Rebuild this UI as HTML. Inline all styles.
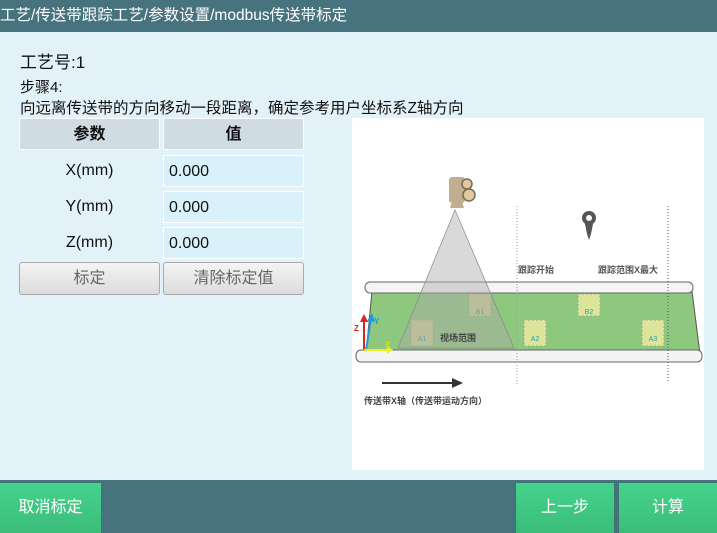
<!DOCTYPE html>
<html><head><meta charset="utf-8"><style>
*{margin:0;padding:0;box-sizing:border-box}
body{width:717px;height:533px;overflow:hidden;background:#e3f2f8;font-family:"Liberation Sans","Noto Sans CJK SC",sans-serif;position:relative;color:#111}
.hdr{position:absolute;left:0;top:0;width:717px;height:32px;background:#47737f;color:#fff;font-size:15.5px;line-height:31px;padding-left:0}
.t{position:absolute;font-size:16px}
.cell{position:absolute;height:32px;font-size:16px;line-height:32px}
.th{background:#cfdde2;border:1px solid #fff;text-align:center;font-weight:bold}
.lab{text-align:center}
.val{background:#d9f1f8;border:1px solid #fff;padding-left:5px}
.btn{position:absolute;height:33px;background:linear-gradient(#f4f4f4,#dcdcdc);border:1px solid #aaa;border-radius:3px;color:#666;font-size:16px;text-align:center;line-height:31px}
.ftr{position:absolute;left:0;top:480px;width:717px;height:53px;background:#47737f}
.gb{position:absolute;top:483px;height:50px;background:linear-gradient(#45d38c,#3bbd7a);color:#fff;font-size:16px;text-align:center;line-height:50px;box-shadow:0 0 2px #2a7a5a}
</style></head><body>
<div class="hdr">工艺/传送带跟踪工艺/参数设置/modbus传送带标定</div>
<div class="t" style="left:20px;top:48px;font-size:17px">工艺号:1</div>
<div class="t" style="left:20px;top:76px;font-size:15px">步骤4:</div>
<div class="t" style="left:20px;top:96px;font-size:15.5px">向远离传送带的方向移动一段距离，确定参考用户坐标系Z轴方向</div>
<div class="cell th" style="left:19px;top:118px;width:141px">参数</div>
<div class="cell th" style="left:163px;top:118px;width:141px">值</div>
<div class="cell lab" style="left:19px;top:155px;width:141px">X(mm)</div>
<div class="cell val" style="left:163px;top:155px;width:141px">0.000</div>
<div class="cell lab" style="left:19px;top:191px;width:141px">Y(mm)</div>
<div class="cell val" style="left:163px;top:191px;width:141px">0.000</div>
<div class="cell lab" style="left:19px;top:227px;width:141px">Z(mm)</div>
<div class="cell val" style="left:163px;top:227px;width:141px">0.000</div>
<div class="btn" style="left:19px;top:262px;width:141px">标定</div>
<div class="btn" style="left:163px;top:262px;width:141px">清除标定值</div>
<svg style="position:absolute;left:352px;top:118px" width="352" height="352" viewBox="0 0 352 352">
<rect width="352" height="352" fill="#fff"/>
<polygon points="20,173 340,173 348,236 14,236" fill="#8ec77e" stroke="#555" stroke-width="1"/>
<rect x="13" y="164" width="328" height="11" rx="5" fill="#f4f4f4" stroke="#666"/>
<rect x="4" y="232" width="346" height="12" rx="5" fill="#f4f4f4" stroke="#666"/>
<g font-size="7" fill="#2a9ba8" text-anchor="middle">
<rect x="117" y="176" width="22" height="22" fill="#c8cf8a" stroke="#9a9" stroke-dasharray="2"/><text x="128" y="196">B1</text>
<rect x="226" y="176" width="22" height="22" fill="#dde59a" stroke="#9a9" stroke-dasharray="2"/><text x="237" y="196">B2</text>
<rect x="59" y="202" width="22" height="26" fill="#c8cf8a" stroke="#9a9" stroke-dasharray="2"/><text x="70" y="223">A1</text>
<rect x="172" y="202" width="22" height="26" fill="#dde59a" stroke="#9a9" stroke-dasharray="2"/><text x="183" y="223">A2</text>
<rect x="290" y="202" width="22" height="26" fill="#dde59a" stroke="#9a9" stroke-dasharray="2"/><text x="301" y="223">A3</text>
</g>
<polygon points="103,92 46,230 162,230" fill="#aaa" fill-opacity="0.45" stroke="#888" stroke-width="0.7"/>
<text x="88" y="223" font-size="9" fill="#444" font-weight="bold">视场范围</text>
<rect x="97" y="59" width="16" height="26" rx="3" fill="#c1ae8e"/>
<path d="M100,84 L110,84 L112,90 L98,90 Z" fill="#c1ae8e"/>
<circle cx="115" cy="66" r="5" fill="#e0c9a0" stroke="#7a6a50" stroke-width="1.5"/>
<circle cx="117" cy="77" r="6" fill="#e0c9a0" stroke="#7a6a50" stroke-width="1.5"/>
<circle cx="237" cy="100" r="7" fill="#555"/><circle cx="237" cy="100" r="3" fill="#fff"/>
<polygon points="233,106 241,106 239,116 237,122 235,116" fill="#555"/>
<line x1="165" y1="88" x2="165" y2="268" stroke="#999" stroke-dasharray="1,2"/>
<line x1="316" y1="88" x2="316" y2="265" stroke="#555" stroke-dasharray="1,2"/>
<text x="166" y="155" font-size="9" fill="#555" font-weight="bold">跟踪开始</text>
<text x="246" y="155" font-size="9" fill="#555" font-weight="bold">跟踪范围X最大</text>
<line x1="12" y1="232" x2="12" y2="202" stroke="#d22" stroke-width="2"/><polygon points="8,204 16,204 12,196" fill="#d22"/>
<text x="2" y="213" font-size="8" fill="#d22" font-weight="bold">Z</text>
<line x1="14" y1="232" x2="19" y2="201" stroke="#29d" stroke-width="2"/><polygon points="15,203 23,204 20,195" fill="#29d"/>
<text x="22" y="206" font-size="8" fill="#29d" font-weight="bold">Y</text>
<line x1="12" y1="232" x2="36" y2="232" stroke="#ee2" stroke-width="2"/><polygon points="35,228 35,236 41,232" fill="#ee2"/>
<text x="33" y="229" font-size="8" fill="#dd0" font-weight="bold">X</text>
<line x1="30" y1="265" x2="102" y2="265" stroke="#333" stroke-width="2"/><polygon points="100,260 100,270 111,265" fill="#333"/>
<text x="12" y="286" font-size="9" fill="#444" font-weight="bold">传送带X轴（传送带运动方向）</text>
</svg>
<div class="ftr"></div>
<div class="gb" style="left:0;width:101px">取消标定</div>
<div class="gb" style="left:516px;width:98px">上一步</div>
<div class="gb" style="left:619px;width:98px">计算</div>
</body></html>
